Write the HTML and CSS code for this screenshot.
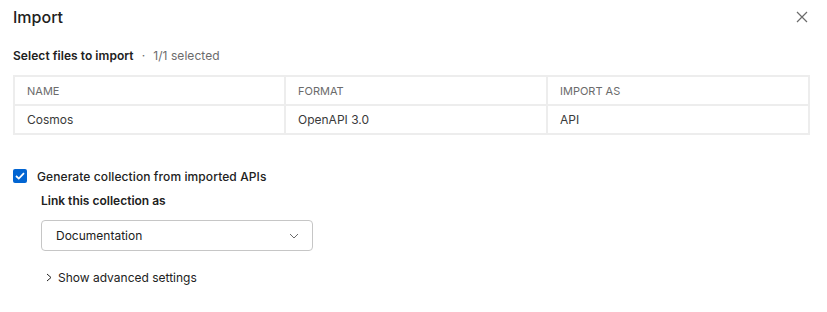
FILE: index.html
```html
<!DOCTYPE html>
<html>
<head>
	<title>Import</title>
	<link rel="stylesheet" href="styles.css">
</head>
<body>

	<div class="dialog">
		<div class="header">
			<h1 class="title">Import</h1>
			<a href="#" class="close">
				<svg width="12" height="12" viewBox="0 0 12 12"><path d="M1 1L11 11M11 1L1 11" stroke="#6b6b6b" stroke-width="1.2" fill="none"/></svg>
			</a>
		</div>

		<p class="subtitle">Select files to import <span class="dot">&middot;</span> <span class="count">1/1 selected</span></p>

		<table class="files">
			<colgroup>
				<col class="c1"><col class="c2"><col class="c3">
			</colgroup>
			<thead>
				<tr><th>NAME</th><th>FORMAT</th><th>IMPORT AS</th></tr>
			</thead>
			<tbody>
				<tr><td>Cosmos</td><td>OpenAPI 3.0</td><td>API</td></tr>
			</tbody>
		</table>

		<label class="check">
			<span class="box">
				<svg width="10" height="8" viewBox="0 0 10 8"><path d="M1 4L3.8 6.6L9 1.2" stroke="#fff" stroke-width="1.8" fill="none"/></svg>
			</span>
			Generate collection from imported APIs
		</label>

		<div class="options">
			<p class="label">Link this collection as</p>
			<div class="select">
				<span>Documentation</span>
				<svg width="10" height="6" viewBox="0 0 10 6"><path d="M1 1L5 5L9 1" stroke="#6b6b6b" stroke-width="1" fill="none"/></svg>
			</div>
			<a href="#" class="advanced">
				<svg width="6" height="9" viewBox="0 0 6 9"><path d="M1 1L5 4.5L1 8" stroke="#212121" stroke-width="1" fill="none"/></svg>
				Show advanced settings
			</a>
		</div>
	</div>

</body>
</html>
```

FILE: styles.css
```css
body{
	margin: 0;
	background: #fff;
	font-family: Inter, "Noto Sans", sans-serif;
	color: #212121;
}

.dialog{
	padding: 6px 17px 0 13px;
}

.header{
	display: flex;
	justify-content: space-between;
	align-items: center;
	height: 22px;
}

.title{
	margin: 0;
	font-size: 16px;
	font-weight: 500;
	line-height: 22px;
}

.close{
	display: flex;
	margin-right: 2px;
}

.subtitle{
	margin: 18px 0 0;
	font-size: 12px;
	font-weight: 600;
	line-height: 20px;
	letter-spacing: 0.05px;
}

.dot, .count{
	color: #6b6b6b;
	font-weight: 400;
}

.dot{
	margin: 0 5px;
}

.files{
	margin-top: 9px;
	width: 797px;
	border-collapse: collapse;
	table-layout: fixed;
	font-size: 12px;
}

.c1{ width: 271px; }
.c2{ width: 262px; }

.files th, .files td{
	border: 2px solid #ededed;
	height: 27px;
	padding: 0 12px;
	text-align: left;
}

.files td{
	color: #3a3a3a;
}

.files th{
	font-weight: 400;
	font-size: 11px;
	color: #6b6b6b;
}

.check{
	display: flex;
	align-items: center;
	margin-top: 31px;
	height: 20px;
	font-size: 12px;
	font-weight: 500;
	letter-spacing: 0.1px;
}

.box{
	display: flex;
	align-items: center;
	justify-content: center;
	width: 14px;
	height: 14px;
	border-radius: 2px;
	background: #0265d2;
	margin-right: 10px;
}

.options{
	padding-left: 28px;
}

.label{
	margin: 5px 0 0;
	font-size: 12px;
	font-weight: 600;
	line-height: 20px;
}

.select{
	display: flex;
	justify-content: space-between;
	align-items: center;
	box-sizing: border-box;
	width: 272px;
	height: 31px;
	margin-top: 9px;
	padding: 0 13px 0 14px;
	border: 1px solid #c6c6c6;
	border-radius: 4px;
	font-size: 12px;
}

.advanced{
	display: flex;
	align-items: center;
	margin-top: 16px;
	padding-left: 5px;
	height: 20px;
	font-size: 12px;
	color: #212121;
	text-decoration: none;
}

.advanced svg{
	margin-right: 6px;
}
```
